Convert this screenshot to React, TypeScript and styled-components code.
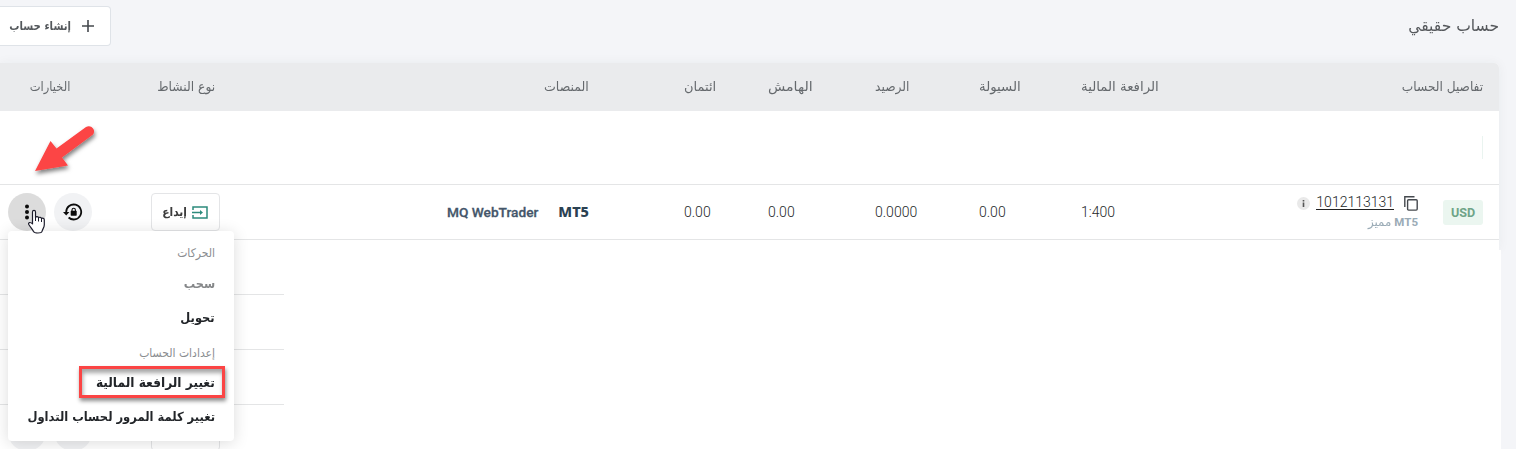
import React from "react";
import styled, { createGlobalStyle, css } from "styled-components";

const Global = createGlobalStyle`
  * { box-sizing: border-box; }
  html, body { margin: 0; padding: 0; }
  body { background: #f4f5f8; overflow: hidden; font-family: Roboto, "DejaVu Sans Condensed", "DejaVu Sans", sans-serif; }
`;

const Page = styled.div`
  position: relative;
  width: 1516px;
  height: 449px;
  overflow: hidden;
  color: #3c4146;
`;

const Label = styled.span<{ $size?: number; $bold?: boolean; $color?: string; $stretch?: number; $start?: boolean }>`
  display: inline-block;
  direction: rtl;
  white-space: nowrap;
  line-height: 20px;
  font-family: "DejaVu Sans Condensed", "DejaVu Sans", sans-serif;
  font-stretch: condensed;
  font-size: ${(p) => p.$size ?? 13}px;
  font-weight: ${(p) => (p.$bold ? 700 : 400)};
  color: ${(p) => p.$color ?? "#65696d"};
  transform: scaleX(${(p) => p.$stretch ?? 1});
  transform-origin: ${(p) => (p.$start ? "left" : "right")} center;
`;

const TopBar = styled.header`
  display: flex;
  justify-content: space-between;
  align-items: center;
  height: 63px;
  padding: 0 17px 11px 0;
`;

const CreateButton = styled.button`
  display: flex;
  align-items: center;
  justify-content: flex-end;
  gap: 11px;
  width: 111px;
  height: 40px;
  padding: 0 16px 0 0;
  background: #fff;
  border: 1px solid #dfe3e8;
  border-left: 0;
  border-radius: 0 4px 4px 0;
`;

const Table = styled.main`
  width: 1499px;
  height: 187px;
  background: #fff;
  border-radius: 0 5px 0 0;
  box-shadow: 0 0 12px rgba(40, 50, 60, 0.05);
`;

const grid = css`
  display: grid;
  grid-template-columns: 151px 293px 240px 84px 107px 104px 102px 169px 249px;
  align-items: center;
`;

const HeadRow = styled.div`
  ${grid}
  height: 48px;
  background: #eaebed;
  border-radius: 0 5px 0 0;
`;

const GroupRow = styled.div`
  display: flex;
  align-items: center;
  justify-content: flex-end;
  height: 74px;
  padding-right: 16px;
  border-bottom: 1px solid #e4e5e6;
`;

const GroupMark = styled.span`
  width: 1px;
  height: 23px;
  background: #eaf4f0;
`;

const AccountRow = styled.div`
  ${grid}
  height: 55px;
  border-bottom: 1px solid #e4e5e6;
`;

const Cell = styled.div<{ $left?: number; $right?: number; $end?: boolean }>`
  display: flex;
  align-items: center;
  justify-content: ${(p) => (p.$end ? "flex-end" : "flex-start")};
  padding-left: ${(p) => p.$left ?? 0}px;
  padding-right: ${(p) => p.$right ?? 0}px;
`;

const Value = styled.span`
  font-size: 14px;
  line-height: 20px;
  font-weight: 300;
  color: #25282a;
`;

const RoundButton = styled.button<{ $active?: boolean }>`
  display: flex;
  align-items: center;
  justify-content: center;
  width: 38px;
  height: 38px;
  padding: 0;
  border: 0;
  border-radius: 50%;
  background: ${(p) => (p.$active ? "#dcdcdc" : "#f1f2f4")};
`;

const Actions = styled.div`
  display: flex;
  gap: 8px;
`;

const OutlineButton = styled.button`
  display: flex;
  align-items: center;
  justify-content: center;
  gap: 5px;
  width: 69px;
  height: 38px;
  padding: 0;
  background: #fff;
  border: 1px solid #e4e5e7;
  border-radius: 4px;
`;

const Platforms = styled.div`
  display: flex;
  align-items: center;
  gap: 20px;
  white-space: nowrap;
`;

const WebTrader = styled.span`
  padding-bottom: 1px;
  font: 500 13.7px/20px Roboto, sans-serif;
  color: #44566a;
  -webkit-text-stroke: 0.3px #44566a;
`;

const MtLogo = styled.span`
  padding-bottom: 2px;
  font: 800 14.5px/20px "Noto Sans", sans-serif;
  color: #2b4152;
`;

const Account = styled.div`
  display: flex;
  flex-direction: column;
  align-items: flex-end;
`;

const AccountLine = styled.div`
  display: flex;
  align-items: center;
  height: 20px;
`;

const AccountNumber = styled.a`
  margin: 0 10px 2px 6px;
  font-size: 14px;
  font-weight: 300;
  line-height: 14px;
  border-bottom: 1px solid #222;
  color: #25282a;
`;

const InfoDot = styled.span`
  display: flex;
  align-items: center;
  justify-content: center;
  width: 13px;
  height: 13px;
  border-radius: 50%;
  background: #e9e9e9;
`;

const AccountType = styled.div`
  display: flex;
  align-items: center;
  gap: 3px;
  height: 17px;
  direction: ltr;
  font: 700 11.5px/17px Roboto, sans-serif;
  color: #9aabb6;
`;

const Currency = styled.span`
  display: flex;
  align-items: center;
  justify-content: center;
  width: 40px;
  height: 25px;
  margin-left: 25px;
  border-radius: 3px;
  background: #ebf6f0;
  color: #6fa488;
  font: 700 12.6px/25px Roboto, sans-serif;
`;

const Lower = styled.section`
  width: 1501px;
  height: 199px;
  padding-top: 44px;
  background: #fff;
`;

const LowerRow = styled.div`
  display: flex;
  align-items: center;
  gap: 59px;
  width: 284px;
  height: 55px;
  padding-left: 8px;
  border-top: 1px solid #e4e5e6;
`;

const Menu = styled.nav`
  position: absolute;
  left: 8px;
  top: 231px;
  display: flex;
  flex-direction: column;
  align-items: flex-end;
  width: 226px;
  height: 210px;
  padding: 11px 19px 0 0;
  background: #fff;
  border-radius: 4px;
  box-shadow: 0 2px 16px rgba(0, 0, 0, 0.14);
`;

const MenuItem = styled.div<{ $h: number }>`
  display: flex;
  align-items: center;
  height: ${(p) => p.$h}px;
`;

const Highlight = styled.div`
  position: absolute;
  left: 79px;
  top: 366px;
  width: 146px;
  height: 32px;
  border: 3px solid #fb4444;
  box-shadow: 1px 3px 4px rgba(0, 0, 0, 0.45), inset 1px 4px 4px rgba(0, 0, 0, 0.35);
`;

const Overlay = styled.svg`
  position: absolute;
  left: 0;
  top: 115px;
  pointer-events: none;
`;

const headings: { text: string; stretch: number; right?: number; end?: boolean }[] = [
  { text: "الخيارات", stretch: 0.98, right: 81, end: true },
  { text: "نوع النشاط", stretch: 1.05, right: 229, end: true },
  { text: "المنصات", stretch: 1.07, right: 95, end: true },
  { text: "ائتمان", stretch: 1.11 },
  { text: "الهامش", stretch: 1.21 },
  { text: "الرصيد", stretch: 1.05 },
  { text: "السيولة", stretch: 1.14 },
  { text: "الرافعة المالية", stretch: 1.14 },
  { text: "تفاصيل الحساب", stretch: 1.04, right: 16, end: true },
];

const values = ["0.00", "0.00", "0.0000", "0.00", "1:400"];

const DotsIcon = () => (
  <svg width="20" height="20" viewBox="0 0 20 20" fill="#0c0c0c">
    <circle cx="10" cy="4.5" r="2" /><circle cx="10" cy="10" r="2" /><circle cx="10" cy="15.5" r="2" />
  </svg>
);

const LockResetIcon = () => (
  <svg width="20" height="20" viewBox="0 0 20 20" fill="none">
    <path d="M3.2 11.5V10a7.5 7.5 0 1 1 2.4 5.5" stroke="#0c0c0c" strokeWidth="1.8" />
    <path d="M0 10h6.4l-3.2 3.6z" fill="#0c0c0c" />
    <path d="M9 9V8a1.7 1.7 0 0 1 3.4 0v1" stroke="#0c0c0c" strokeWidth="1.1" />
    <rect x="7.7" y="8.8" width="6" height="4.9" rx=".6" fill="#0c0c0c" />
  </svg>
);

const DepositIcon = () => (
  <svg width="16" height="13" viewBox="0 0 16 13" fill="none" stroke="#2d8b7c" strokeWidth="1.5">
    <path d="M1 4V1h14v11H1V9M0 6.5h9" />
    <path d="M8 4l3 2.5L8 9z" fill="#2d8b7c" stroke="none" />
  </svg>
);

export default function App() {
  return (
    <>
      <Global />
      <Page>
        <TopBar>
          <CreateButton>
            <Label $size={11.5} $bold $color="#54585c" $stretch={0.98}>إنشاء حساب</Label>
            <svg width="12" height="12" viewBox="0 0 12 12" stroke="#45494e" strokeWidth="1.6"><path d="M6 0v12M0 6h12" /></svg>
          </CreateButton>
          <Label $size={16} $color="#55585c" $stretch={1.08}>حساب حقيقي</Label>
        </TopBar>
        <Table>
          <HeadRow>
            {headings.map((h) => (
              <Cell key={h.text} $right={h.right} $end={h.end}>
                <Label $stretch={h.stretch} $start={!h.end}>{h.text}</Label>
              </Cell>
            ))}
          </HeadRow>
          <GroupRow><GroupMark /></GroupRow>
          <AccountRow>
            <Cell $left={8}>
              <Actions>
                <RoundButton $active><DotsIcon /></RoundButton>
                <RoundButton><LockResetIcon /></RoundButton>
              </Actions>
            </Cell>
            <Cell>
              <OutlineButton><Label $size={11.5} $bold $color="#3c3c3c" $stretch={1.03}>إيداع</Label><DepositIcon /></OutlineButton>
            </Cell>
            <Cell $right={95} $end>
              <Platforms><WebTrader>MQ WebTrader</WebTrader><MtLogo>MT5</MtLogo></Platforms>
            </Cell>
            {values.map((v, i) => <Cell key={i}><Value>{v}</Value></Cell>)}
            <Cell $right={16} $end>
              <Account>
                <AccountLine>
                  <InfoDot>
                    <svg width="3" height="7" viewBox="0 0 3 7" fill="#555"><path d="M.7 0h1.6v1.5H.7zM.7 2.5h1.6V7H.7z" /></svg>
                  </InfoDot>
                  <AccountNumber>1012113131</AccountNumber>
                  <svg width="14" height="15" viewBox="0 0 14 15" fill="none" stroke="#45494e" strokeWidth="1.4">
                    <path d="M.8 11V.8h9.7" /><rect x="3.6" y="3.7" width="9.6" height="10.4" rx="1" />
                  </svg>
                </AccountLine>
                <AccountType><Label $size={12} $color="#9aabb6" $stretch={1.1}>مميز</Label>MT5</AccountType>
              </Account>
              <Currency>USD</Currency>
            </Cell>
          </AccountRow>
        </Table>
        <Lower>
          <LowerRow /><LowerRow /><LowerRow>
            <Actions><RoundButton /><RoundButton /></Actions><OutlineButton />
          </LowerRow>
        </Lower>
        <Menu>
          <MenuItem $h={23}><Label $size={12} $color="#8a8d90">الحركات</Label></MenuItem>
          <MenuItem $h={38}><Label $size={12.5} $bold $color="#858789" $stretch={1.01}>سحب</Label></MenuItem>
          <MenuItem $h={30}><Label $size={12.5} $bold $color="#222529" $stretch={1.02}>تحويل</Label></MenuItem>
          <MenuItem $h={42}><Label $size={12} $color="#8a8d90">إعدادات الحساب</Label></MenuItem>
          <MenuItem $h={18}><Label $size={13} $bold $color="#222529" $stretch={1.045}>تغيير الرافعة المالية</Label></MenuItem>
          <MenuItem $h={49}><Label $size={12.5} $bold $color="#222529" $stretch={1.025}>تغيير كلمة المرور لحساب التداول</Label></MenuItem>
        </Menu>
        <Highlight />
        <Overlay width="110" height="125" viewBox="0 0 110 125">
          <defs>
            <filter id="shade" x="-30%" y="-30%" width="160%" height="160%">
              <feDropShadow dx="1" dy="3" stdDeviation="2" floodColor="#000" floodOpacity=".5" />
            </filter>
          </defs>
          <path filter="url(#shade)" fill="#fc4444" d="M35 56L50.5 26l6 7.5L86 12c5-3 10.500 3 7 7.500L62 42.500l6 8z" />
          <path fill="#fff" stroke="#1c1c2b" strokeWidth="1.2" strokeLinejoin="round" d="M32.500 97c0-2.200 3-2.200 3 0v5.500c.5-1.400 3-1.200 3 .3.800-1 3-.6 3 .8 1-.8 2.800-.2 2.800 1.200v5c0 3-1.800 4-2.300 6.700-.4 2-7.500 2-8.500 0-1.200-2.700-3-4-4.700-7-1-2 1.500-3 3.700-.6z" />
          <path stroke="#1c1c2b" strokeWidth="1" d="M35.500 102v4M38.500 103v3.500M41.500 104v3" />
        </Overlay>
      </Page>
    </>
  );
}
